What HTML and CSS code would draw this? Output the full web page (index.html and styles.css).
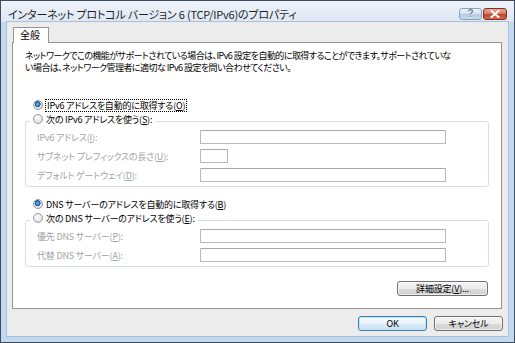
FILE: index.html
```html
<!DOCTYPE html>
<html lang="ja">
<head>
  <meta charset="UTF-8" />
  <title>インターネット プロトコル バージョン 6 (TCP/IPv6)のプロパティ</title>
  <link rel="stylesheet" href="styles.css">
</head>
<body>
  <div class="window">
    <div class="titlebar">
      <span class="title">インターネット プロトコル バージョン 6 (TCP/IPv6)のプロパティ</span>
      <div class="caption">
        <span class="cap-btn help">?</span>
        <span class="cap-btn close">
          <svg width="10" height="8" viewBox="0 0 10 8">
            <path d="M1.5 1 L8.5 7 M8.5 1 L1.5 7" stroke="#fff" stroke-width="2" stroke-linecap="square" />
          </svg>
        </span>
      </div>
    </div>

    <div class="client">
      <div class="tabs">
        <span class="tab">全般</span>
      </div>

      <div class="page">
        <p class="desc">ネットワークでこの機能がサポートされている場合は、IPv6 設定を自動的に取得することができます。サポートされていな<br>い場合は、ネットワーク管理者に適切な IPv6 設定を問い合わせてください。</p>

        <div class="radio-row">
          <span class="radio checked"></span>
          <span class="label focus">IPv6 アドレスを自動的に取得する(<u>O</u>)</span>
        </div>

        <fieldset class="group">
          <legend>
            <span class="radio"></span>
            <span class="label">次の IPv6 アドレスを使う(<u>S</u>):</span>
          </legend>
          <div class="fields">
            <div class="field">
              <span class="field-label">IPv6 アドレス(<u>I</u>):</span>
              <span class="input wide"></span>
            </div>
            <div class="field">
              <span class="field-label">サブネット プレフィックスの長さ(<u>U</u>):</span>
              <span class="input short"></span>
            </div>
            <div class="field">
              <span class="field-label">デフォルト ゲートウェイ(<u>D</u>):</span>
              <span class="input wide"></span>
            </div>
          </div>
        </fieldset>

        <div class="radio-row second">
          <span class="radio checked"></span>
          <span class="label">DNS サーバーのアドレスを自動的に取得する(<u>B</u>)</span>
        </div>

        <fieldset class="group">
          <legend>
            <span class="radio"></span>
            <span class="label">次の DNS サーバーのアドレスを使う(<u>E</u>):</span>
          </legend>
          <div class="fields">
            <div class="field">
              <span class="field-label">優先 DNS サーバー(<u>P</u>):</span>
              <span class="input wide"></span>
            </div>
            <div class="field">
              <span class="field-label">代替 DNS サーバー(<u>A</u>):</span>
              <span class="input wide"></span>
            </div>
          </div>
        </fieldset>

        <div class="page-actions">
          <button class="btn advanced">詳細設定(<u>V</u>)...</button>
        </div>
      </div>

      <div class="footer">
        <button class="btn default">OK</button>
        <button class="btn">キャンセル</button>
      </div>
    </div>
  </div>
</body>
</html>
```

FILE: styles.css
```css
* {
  margin: 0;
  padding: 0;
  box-sizing: border-box;
}

html, body {
  width: 515px;
  height: 343px;
  overflow: hidden;
  background: #fff;
  font-family: "Noto Sans CJK JP", sans-serif;
  font-feature-settings: "palt";
  color: #000;
}

.window {
  width: 515px;
  height: 343px;
  border: 1px solid #3d4c5e;
  background: #c4d8ef;
  display: flex;
  flex-direction: column;
}

/* タイトルバー */
.titlebar {
  height: 21px;
  display: flex;
  align-items: flex-start;
  padding: 7px 7px 0 7px;
  background: linear-gradient(to bottom, #eef3f9, #dde7f3);
}

.title {
  font-size: 11px;
  line-height: 12px;
  letter-spacing: -0.2px;
  color: #1e1e1e;
  white-space: nowrap;
}

.caption {
  margin-left: auto;
  display: flex;
  gap: 1px;
}

.cap-btn {
  height: 12px;
  display: flex;
  align-items: center;
  justify-content: center;
  border-radius: 3px;
}

.help {
  width: 23px;
  border: 1px solid #8ba0bd;
  background: linear-gradient(to bottom, #eef3f9 0%, #d3deec 50%, #b9cbe1 51%, #c9d8ea 100%);
  color: #6f8098;
  font-family: "Liberation Sans", sans-serif;
  font-size: 10px;
  font-weight: bold;
  line-height: 10px;
  text-shadow: 0 1px 0 #fff;
}

.close {
  width: 24px;
  border: 1px solid #8a2e20;
  background: linear-gradient(to bottom, #e3a897 0%, #d27a63 50%, #bb4529 51%, #cf684c 100%);
}

/* クライアント領域 */
.client {
  flex: 1;
  margin: 0 6px 6px 6px;
  background: #ececec;
  box-shadow: 0 0 0 1px #a9c0dd;
  display: flex;
  flex-direction: column;
}

.tabs {
  display: flex;
  padding: 5px 0 0 6px;
}

.tab {
  position: relative;
  z-index: 1;
  width: 36px;
  height: 16px;
  margin-bottom: -1px;
  padding-left: 6px;
  border: 1px solid #959595;
  border-bottom: none;
  background: #fff;
  font-size: 10px;
  line-height: 14px;
}

.page {
  flex: 1;
  margin: 0 6px 0 5px;
  border: 1px solid #959595;
  background: #fff;
  padding: 7px 12px 0 12px;
  font-size: 9px;
  letter-spacing: -0.2px;
}

.desc {
  line-height: 12px;
  letter-spacing: -0.55px;
  white-space: nowrap;
}

.radio-row {
  height: 12px;
  margin-top: 25px;
  padding-left: 8px;
  display: flex;
  align-items: center;
  gap: 3px;
}

.radio-row.second {
  margin-top: 11px;
}

.radio {
  width: 10px;
  height: 10px;
  flex-shrink: 0;
  border-radius: 50%;
  border: 1px solid #9a9a9a;
  background: radial-gradient(circle at 40% 35%, #ffffff 0%, #e6e6e6 60%, #cfcfcf 100%);
}

.radio.checked {
  background:
    radial-gradient(circle at 45% 40%, #8fd0ff 0, #2f7fd3 1.6px, #124b98 2.8px, transparent 3.2px),
    radial-gradient(circle at 40% 35%, #ffffff 0%, #e6e6e6 60%, #cfcfcf 100%);
}

.label {
  line-height: 11px;
  white-space: nowrap;
}

.label.focus {
  outline: 1px dotted #000;
  outline-offset: 0;
  padding: 0 1px;
}

/* グループボックス */
.group {
  margin-top: 2px;
  border: 1px solid #d5dfe5;
  border-radius: 3px;
  padding: 0 0 4px 0;
}

.group legend {
  margin-left: 4px;
  padding: 0 3px 4px 3px;
  display: flex;
  align-items: center;
  gap: 3px;
  height: 16px;
}

.fields {
  display: flex;
  flex-direction: column;
  gap: 5px;
  padding: 1px 0 0 11px;
}

.field {
  display: flex;
  align-items: center;
  height: 14px;
}

.field-label {
  width: 163px;
  color: #a3a3a3;
  white-space: nowrap;
}

.input {
  height: 14px;
  border: 1px solid #b9b9b9;
  border-top-color: #a8a8a8;
  border-radius: 1px;
  background: #fff;
}

.input.wide {
  width: 246px;
}

.input.short {
  width: 28px;
}

/* ボタン */
.btn {
  height: 15px;
  border: 1px solid #707070;
  border-radius: 3px;
  background: linear-gradient(to bottom, #f4f4f4 0%, #ebebeb 50%, #dcdcdc 51%, #cfcfcf 100%);
  box-shadow: inset 0 0 0 1px rgba(255, 255, 255, 0.6);
  font-family: "Noto Sans CJK JP", sans-serif;
  font-feature-settings: "palt";
  font-size: 9px;
  line-height: 12px;
  letter-spacing: -0.2px;
  color: #000;
}

.page-actions {
  display: flex;
  justify-content: flex-end;
  margin-top: 14px;
  padding-right: 1px;
}

.btn.advanced {
  width: 91px;
}

.footer {
  display: flex;
  justify-content: flex-end;
  gap: 7px;
  padding: 7px 5px 5px 0;
}

.footer .btn {
  width: 69px;
}

.btn.default {
  border-color: #3c7fb1;
  background: linear-gradient(to bottom, #f5fafd 0%, #e9f3fa 50%, #d9e9f5 51%, #cfe3f2 100%);
  box-shadow: inset 0 0 0 1px #bfe3f7;
}
```
